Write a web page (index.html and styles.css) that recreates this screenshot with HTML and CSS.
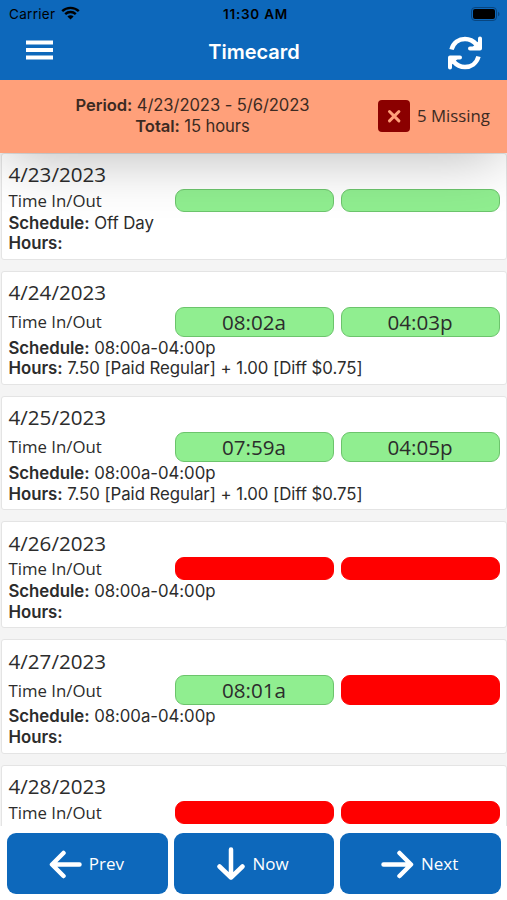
FILE: index.html
```html
<!DOCTYPE html>
<html lang="en">
<head>
<meta charset="utf-8">
<title>Timecard</title>
<link rel="stylesheet" href="styles.css">
</head>
<body>
<div class="app">
  <header class="top">
    <div class="status">
      <span class="carrier">Carrier
        <svg class="wifi" width="19" height="14" viewBox="0 0 19 14"><path d="M1.2 5.2a12 12 0 0 1 16.6 0M4.2 8.1a7.7 7.7 0 0 1 10.6 0" fill="none" stroke="#000" stroke-width="2.4"/><path d="M9.5 13.6 6.4 10.5a4.4 4.4 0 0 1 6.2 0z"/></svg>
      </span>
      <span class="clock">11:30 AM</span>
      <svg class="battery" width="29" height="14" viewBox="0 0 29 14"><rect x=".5" y=".5" width="25" height="13" rx="3.5" fill="none" stroke="#08457f"/><rect x="2" y="2" width="22" height="10" rx="2"/><path d="M27 4.7a2.5 2.5 0 0 1 0 4.6z" fill="#08457f"/></svg>
    </div>
    <div class="nav">
      <svg class="menu" width="27" height="20" viewBox="0 0 27 20"><path d="M0 2.5h27M0 10h27M0 17.500h27" stroke="#fff" stroke-width="4"/></svg>
      <h1>Timecard</h1>
      <svg class="refresh" width="36" height="34" viewBox="0 0 36 34" fill="none" stroke="#fff" stroke-width="4.500"><path d="M4.500 13.500C6.500 6.500 12 3 18 3c4.500 0 8.500 2 11.500 5.500M31.500 20.500c-2 7-7.500 10.500-13.500 10.500-4.500 0-8.500-2-11.500-5.500"/><path d="M33 2.500v10H23M3 31.500v-10h10" stroke-linecap="round" stroke-linejoin="round" stroke-width="4"/><path d="M33 3.500 24 12.500h9zM3 30.500l9-9H3z" fill="#fff" stroke="none"/></svg>
    </div>
  </header>
  <section class="summary">
    <div class="totals"><div><b>Period:</b> 4/23/2023 - 5/6/2023</div><div><b>Total:</b> 15 hours</div></div>
    <div class="missing">
      <svg width="32" height="32" viewBox="0 0 32 32"><rect width="32" height="32" rx="4" fill="#8b0000"/><path d="M11.500 11.500l9.400 9.400M20.900 11.500l-9.400 9.400" stroke="#ffa07a" stroke-width="3" stroke-linecap="round"/></svg>
      <span>5 Missing</span>
    </div>
  </section>
  <main class="days">
    <article class="day short">
      <h2>4/23/2023</h2>
      <div class="punches"><span class="label">Time In/Out</span><span class="pill"></span><span class="pill"></span></div>
      <p><b>Schedule:</b> Off Day</p><p><b>Hours:</b></p>
    </article>
    <article class="day">
      <h2>4/24/2023</h2>
      <div class="punches"><span class="label">Time In/Out</span><span class="pill">08:02a</span><span class="pill">04:03p</span></div>
      <p><b>Schedule:</b> 08:00a-04:00p</p><p><b>Hours:</b> 7.50 [Paid Regular] + 1.00 [Diff $0.75]</p>
    </article>
    <article class="day">
      <h2>4/25/2023</h2>
      <div class="punches"><span class="label">Time In/Out</span><span class="pill">07:59a</span><span class="pill">04:05p</span></div>
      <p><b>Schedule:</b> 08:00a-04:00p</p><p><b>Hours:</b> 7.50 [Paid Regular] + 1.00 [Diff $0.75]</p>
    </article>
    <article class="day short">
      <h2>4/26/2023</h2>
      <div class="punches"><span class="label">Time In/Out</span><span class="pill absent"></span><span class="pill absent"></span></div>
      <p><b>Schedule:</b> 08:00a-04:00p</p><p><b>Hours:</b></p>
    </article>
    <article class="day">
      <h2>4/27/2023</h2>
      <div class="punches"><span class="label">Time In/Out</span><span class="pill">08:01a</span><span class="pill absent"></span></div>
      <p><b>Schedule:</b> 08:00a-04:00p</p><p><b>Hours:</b></p>
    </article>
    <article class="day short">
      <h2>4/28/2023</h2>
      <div class="punches"><span class="label">Time In/Out</span><span class="pill absent"></span><span class="pill absent"></span></div>
    </article>
  </main>
  <footer class="actions">
    <button><svg width="33" height="32" viewBox="0 0 33 32"><path d="M30.500 16.500H4M14.500 5 3 16.500 14.500 28"/></svg><span>Prev</span></button>
    <button><svg class="down" width="28" height="33" viewBox="0 0 28 33"><path d="M14 2.500V29M2.500 19.500 14 30.500l11.500-11"/></svg><span>Now</span></button>
    <button><svg width="33" height="32" viewBox="0 0 33 32"><path d="M2.500 16.500H29M18.500 5 30 16.500 18.500 28"/></svg><span>Next</span></button>
  </footer>
</div>
</body>
</html>
```

FILE: styles.css
```css
* { box-sizing: border-box; }
body { margin: 0; background: #fff; color: #2c2c2c; font-family: Inter, sans-serif; font-size: 16.800px; }
h1, h2, p { margin: 0; }
.app { display: flex; flex-direction: column; width: 507px; height: 900px; overflow: hidden; }

.top { position: relative; z-index: 2; flex: none; height: 79.500px; background: #0d68bb; }
.status { display: grid; grid-template-columns: 1fr auto 1fr; align-items: center; height: 27px; padding: 0 7px 0 9px; color: #000; font-size: 13.500px; }
.carrier { display: flex; align-items: center; gap: 6px; letter-spacing: .3px; }
.wifi { margin-top: -2px; }
.clock { font-weight: 600; font-size: 13.500px; letter-spacing: .75px; margin-right: -2px; }
.battery { justify-self: end; }
.nav { display: grid; grid-template-columns: 1fr auto 1fr; align-items: center; height: 51px; padding: 0 24px 0 26px; color: #fff; }
.nav h1 { font-size: 20px; font-weight: 600; line-height: 24px; margin-left: -1px; margin-top: -1px; }
.menu { margin-top: -5px; }
.refresh { justify-self: end; }

.summary { position: relative; z-index: 1; flex: none; display: flex; align-items: center; height: 73px; padding-left: 7px; background: #ffa07a; box-shadow: 0 8px 60px -6px rgba(0, 0, 0, .3); color: #3c2a22; }
.totals { width: 371px; text-align: center; line-height: 21px; font-size: 16.600px; letter-spacing: -.08px; }
.missing { display: flex; align-items: center; gap: 7px; margin-top: -1px; font-family: "Open Sans", sans-serif; }
.missing svg { margin-top: 1px; }
b { font-weight: 600; }

.days { flex: none; display: flex; flex-direction: column; gap: 11px; height: 673.500px; overflow: hidden; background: #f4f4f4; }
.day { flex: none; height: 114.400px; margin: 0 0 0 1px; padding: 0 7px 0 6.500px; border: 1.500px solid #e4e4e4; border-radius: 3px; background: #fff; }
.day.short { height: 107px; }
.day h2 { height: 35px; padding-top: 6.300px; font: 400 20.600px/28px "Open Sans", sans-serif; }
.punches { display: grid; grid-template-columns: 159px 159px 159px; gap: 7px; align-items: center; height: 30px; margin-bottom: 1px; }
.short .punches { height: 23px; }
.label { font-family: "Open Sans", sans-serif; line-height: 23px; }
.pill { display: flex; align-items: center; justify-content: center; height: 100%; border: 1px solid #6cc46c; border-radius: 9px; background: #90ee90; font: 20.600px/28px "Open Sans", sans-serif; }
.pill.absent { border-color: #f00; background: #f00; }
.day p { line-height: 20.800px; white-space: nowrap; letter-spacing: -.04px; }

.actions { display: grid; grid-template-columns: repeat(3, 1fr); gap: 6px; height: 74px; padding: 7px 6px 6px 7px; background: #fff; }
.actions button { display: flex; align-items: center; justify-content: center; gap: 7px; height: 61px; padding: 0 2px 0 0; border: 0; border-radius: 9px; background: #0d68bb; color: #fff; font: 17px/24px "Open Sans", sans-serif; }
.actions path { fill: none; stroke: #fff; stroke-width: 4.500; stroke-linecap: round; stroke-linejoin: round; }
```
